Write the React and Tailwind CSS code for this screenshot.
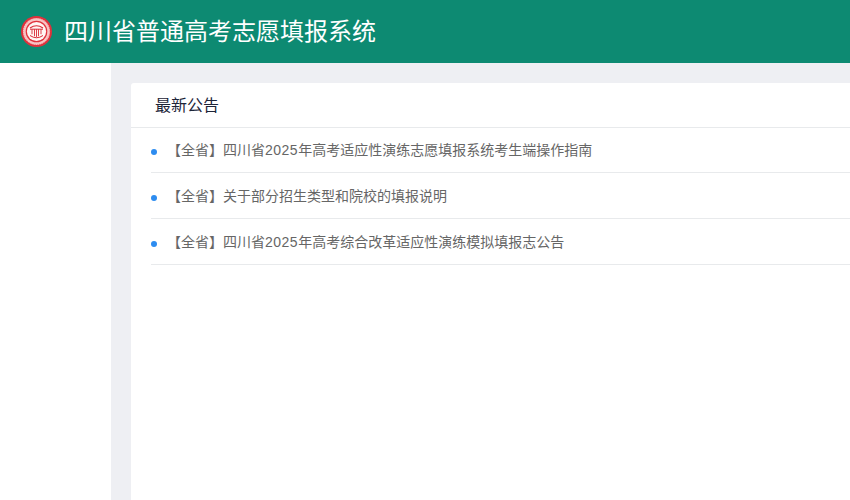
const NOTICES = [
  '【全省】四川省2025年高考适应性演练志愿填报系统考生端操作指南',
  '【全省】关于部分招生类型和院校的填报说明',
  '【全省】四川省2025年高考综合改革适应性演练模拟填报志公告',
];

function Logo() {
  return (
    <svg width="31" height="31" viewBox="0 0 31 31" className="shrink-0">
      <circle cx="15.5" cy="15.5" r="15.5" fill="#e0313c" />
      <circle cx="15.5" cy="15.5" r="13.6" fill="#f8c4c4" />
      <circle cx="15.5" cy="15.5" r="13.6" fill="none" stroke="#e0313c" strokeWidth="1.6" strokeDasharray="1 1.2" opacity="0.45" />
      <circle cx="15.5" cy="15.5" r="10.8" fill="#e0313c" />
      <circle cx="15.5" cy="15.5" r="9.6" fill="#fff6f4" />
      <path d="M9 12 Q15.5 7.5 22 12" stroke="#d92c38" strokeWidth="1.1" fill="none" />
      <path d="M9 13.2h13" stroke="#d92c38" strokeWidth="1" fill="none" />
      <path d="M11 13.2v5M13.5 13.2v7M15.5 13.2v8M17.5 13.2v7M20 13.2v5" stroke="#d92c38" strokeWidth="0.9" fill="none" />
      <path d="M9 19.5q6.5 4.5 13 0" stroke="#d92c38" strokeWidth="1" fill="none" />
    </svg>
  );
}

export default function App() {
  return (
    <div className="h-[500px] w-[850px] overflow-hidden flex flex-col bg-white font-['Liberation_Sans','Noto_Sans_CJK_SC',sans-serif]">
      <header className="h-[63px] shrink-0 bg-[#0d8a72] flex items-center pl-[21px] gap-[12px]">
        <Logo />
        <h1 className="text-[24px] text-white font-normal">四川省普通高考志愿填报系统</h1>
      </header>

      <div className="flex-1 flex min-h-0">
        <aside className="w-[111px] shrink-0 bg-white" />
        <main className="flex-1 min-w-0 bg-[#eeeff3] pt-5 pl-5">
          <section className="h-full bg-white rounded-tl-[3px]">
            <div className="h-[45px] border-b border-[#e8eaec] pl-6 pt-[2px] flex items-center text-[16px] text-[#1c2438]">
              最新公告
            </div>
            <ul className="pl-5">
              {NOTICES.map((text) => (
                <li key={text} className="h-[46px] pt-[2px] first:h-[45px] first:pt-0 border-b border-[#e8eaec] flex items-center text-[14px] text-[#666666]">
                  <span className="w-[6px] h-[6px] rounded-full bg-[#2d8cf0] mr-[10px] mt-[3px] shrink-0" />
                  <span className="whitespace-nowrap">
                    {text.split(/(2025)/).map((part) =>
                      part === '2025' ? <span key={part} className="tracking-[0.5px]">{part}</span> : part
                    )}
                  </span>
                </li>
              ))}
            </ul>
          </section>
        </main>
      </div>
    </div>
  );
}
